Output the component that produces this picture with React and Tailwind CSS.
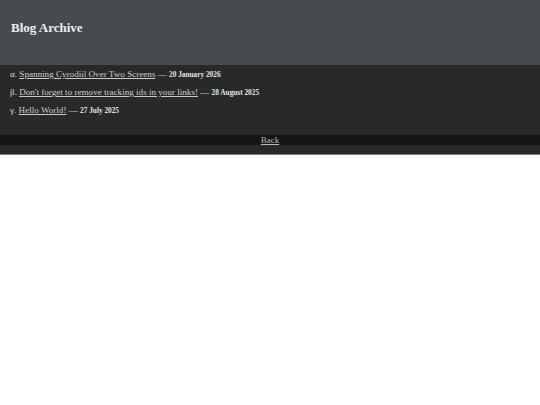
export default function App() {
  const posts = [
    { mark: 'α.', title: 'Spanning Cyrodiil Over Two Screens', date: '20 January 2026' },
    { mark: 'β.', title: "Don't forget to remove tracking ids in your links!", date: '28 August 2025' },
    { mark: 'γ.', title: 'Hello World!', date: '27 July 2025' },
  ];

  return (
    <div className="bg-white min-h-[405px] font-['Liberation_Serif',serif]">
      <header className="h-[65px] bg-[#464c4e] pt-[21px] px-[11px]">
        <h1 className="text-[13px] font-bold text-[#eeeeee] leading-[13px]">Blog Archive</h1>
      </header>
      <main className="bg-[#27292b] pt-[1px] pb-[15px]">
        <ul className="px-[10px]">
          {posts.map((p) => (
            <li key={p.title} className="h-[18px] flex items-center text-[9.1px] text-[#dddddd] whitespace-pre">
              <span>{p.mark} </span>
              <a href="#" className="underline text-[#cccccc]">{p.title}</a>
              <span className="text-[#bbbbbb]"> — </span>
              <span className="text-[7.3px] font-bold text-[#e4e4e4]">{p.date}</span>
            </li>
          ))}
        </ul>
      </main>
      <div className="h-[10px] bg-[#151515] flex items-center justify-center">
        <a href="#" className="underline text-[9px] text-[#bbbbbb] leading-none">Back</a>
      </div>
      <div className="h-[10px] bg-[#27292b] border-b border-[#777777]" />
    </div>
  );
}
